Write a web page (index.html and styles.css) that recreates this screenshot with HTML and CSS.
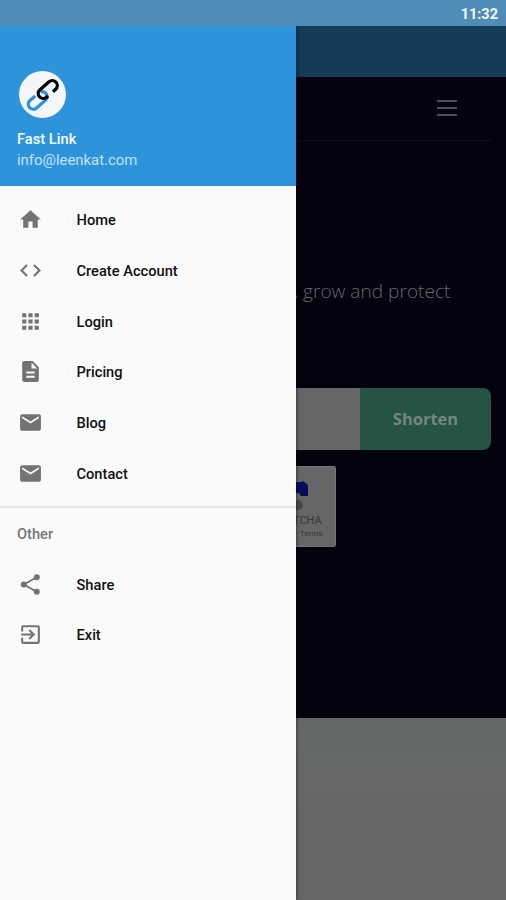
FILE: index.html
```html
<!DOCTYPE html>
<html lang="en">
<head>
<meta charset="utf-8">
<title>Fast Link</title>
<link rel="stylesheet" href="styles.css">
</head>
<body>
<header class="status"><span>11:32</span></header>
<div class="screen">
  <aside class="drawer">
    <div class="profile">
      <div class="avatar">
        <svg viewBox="0 0 47 47" fill="none" stroke-width="3.3">
          <path d="M1 -5H-6A5 5 0 0 0 -6 5H6A5 5 0 0 0 7.500 -4.600" stroke="#2d91dc" transform="translate(18.800 29.300) rotate(-41)"/>
          <path d="M-4 5H-6A5 5 0 0 1 -6 -5H6A5 5 0 0 1 6 5H2.500" stroke="#030507" transform="translate(28.800 18.500) rotate(-41)"/>
        </svg>
      </div>
      <div class="name">Fast Link</div>
      <div class="mail">info@leenkat.com</div>
    </div>
    <nav class="menu">
      <a class="item"><svg viewBox="0 0 24 24"><path d="M10 20v-6h4v6h5v-8h3L12 3 2 12h3v8z"/></svg>Home</a>
      <a class="item"><svg viewBox="0 0 24 24"><path d="M9.4 16.6L4.8 12l4.6-4.6L8 6l-6 6 6 6 1.4-1.4zm5.2 0l4.6-4.6-4.6-4.6L16 6l6 6-6 6-1.4-1.4z"/></svg>Create Account</a>
      <a class="item"><svg viewBox="0 0 24 24"><path d="M4 8h4V4H4v4zm6 12h4v-4h-4v4zm-6 0h4v-4H4v4zm0-6h4v-4H4v4zm6 0h4v-4h-4v4zm6-10v4h4V4h-4zm-6 4h4V4h-4v4zm6 6h4v-4h-4v4zm0 6h4v-4h-4v4z"/></svg>Login</a>
      <a class="item"><svg viewBox="0 0 24 24"><path d="M14 2H6c-1.100 0-2 .9-2 2v16c0 1.100.9 2 2 2h12c1.100 0 2-.9 2-2V8l-6-6zm2 16H8v-2h8v2zm0-4H8v-2h8v2zm-3-5V3.500L18.500 9H13z"/></svg>Pricing</a>
      <a class="item"><svg viewBox="0 0 24 24"><path d="M20 4H4c-1.100 0-2 .9-2 2v12c0 1.100.9 2 2 2h16c1.100 0 2-.9 2-2V6c0-1.100-.9-2-2-2zm0 4l-8 5-8-5V6l8 5 8-5v2z"/></svg>Blog</a>
      <a class="item"><svg viewBox="0 0 24 24"><path d="M20 4H4c-1.100 0-2 .9-2 2v12c0 1.100.9 2 2 2h16c1.100 0 2-.9 2-2V6c0-1.100-.9-2-2-2zm0 4l-8 5-8-5V6l8 5 8-5v2z"/></svg>Contact</a>
    </nav>
    <div class="group">Other</div>
    <nav>
      <a class="item"><svg viewBox="0 0 24 24"><circle cx="18" cy="5" r="2.900"/><circle cx="5.500" cy="12" r="2.900"/><circle cx="18" cy="19" r="2.900"/><path d="M18 5L5.500 12 18 19" fill="none" stroke="#737373" stroke-width="1.800"/></svg>Share</a>
      <a class="item"><svg viewBox="0 0 24 24"><path d="M10.090 15.590L11.500 17l5-5-5-5-1.410 1.410L12.670 11H3v2h9.670l-2.580 2.590zM19 3H5c-1.110 0-2 .9-2 2v4h2V5h14v14H5v-4H3v4c0 1.100.89 2 2 2h14c1.100 0 2-.9 2-2V5c0-1.100-.9-2-2-2z"/></svg>Exit</a>
    </nav>
  </aside>
  <main class="page">
    <div class="toolbar"></div>
    <section class="hero">
      <div class="navbar"><div class="burger"><i></i><i></i><i></i></div></div>
      <p class="lead">, grow and protect</p>
      <div class="form"><div class="field"></div><div class="button">Shorten</div></div>
      <div class="captcha">
        <svg viewBox="0 0 40 46"><path d="M0 15q4 1 7-1l5 4v11H5l-2-3H0z" fill="#060b5c"/><path d="M0 34l4-1 3 4-1 4-4 2H0z" fill="#484849"/></svg>
        <div class="brand">TCHA</div>
        <div class="terms">- Terms</div>
      </div>
    </section>
    <section class="below"></section>
  </main>
</div>
</body>
</html>
```
FILE: styles.css
```css
* { box-sizing: border-box; }
body {
  margin: 0;
  height: 900px;
  display: flex;
  flex-direction: column;
  overflow: hidden;
  font-family: Roboto, sans-serif;
}
.status {
  height: 26px;
  flex: none;
  display: flex;
  align-items: center;
  justify-content: flex-end;
  padding: 2px 8px 0 0;
  background: #4f8db8;
  color: #f4f9fd;
  font-size: 14.5px;
  font-weight: 700;
}
.screen { flex: 1; display: flex; min-height: 0; }
.drawer {
  width: 296px;
  flex: none;
  background: #fafafa;
  box-shadow: 0 0 4px rgba(0, 0, 0, .65);
  clip-path: inset(0 -8px 0 0);
  z-index: 1;
}
.profile {
  height: 159.500px;
  padding: 45px 17px 0;
  background: #2d94dc;
  color: #f5faff;
  font-size: 14.900px;
  line-height: 21px;
}
.avatar {
  width: 47px;
  height: 47px;
  margin: 0 0 11px 2px;
  border-radius: 50%;
  background: #f4f5f6;
}
.avatar svg { display: block; width: 47px; height: 47px; }
.name { font-weight: 500; font-size: 14.700px; }
.mail { color: #c3e1f8; }
.menu { padding: 9px 0 8px; border-bottom: 2px solid #e5e5e5; }
.item {
  display: flex;
  align-items: center;
  height: 50.650px;
  padding: 1px 0 0 17.500px;
  color: #111;
  font-size: 14.650px;
  font-weight: 500;
}
.item svg { width: 25px; height: 25px; margin: -1px 34px 0 0; fill: #737373; }
.group {
  height: 50.500px;
  padding-left: 17px;
  line-height: 53px;
  font-size: 14.650px;
  font-weight: 500;
  color: #777;
}
.page { flex: 1; min-width: 0; display: flex; flex-direction: column; overflow: hidden; }
.toolbar { height: 51px; flex: none; background: #143b58; }
.hero { height: 640.500px; flex: none; background: #04020f; padding-right: 15px; }
.navbar {
  height: 64px;
  display: flex;
  justify-content: flex-end;
  padding: 23px 34px 0 0;
  border-bottom: 1px solid #14121d;
}
.burger { width: 20px; display: flex; flex-direction: column; gap: 5px; }
.burger i { height: 2px; background: #4f4e53; }
.lead {
  margin: 135px 0 0 -2px;
  height: 31px;
  line-height: 30px;
  font-family: "Open Sans", sans-serif;
  font-size: 19.100px;
  font-weight: 300;
  color: #69686f;
  white-space: nowrap;
}
.form { display: flex; height: 62px; margin-top: 81px; border-radius: 0 8px 8px 0; overflow: hidden; }
.field { flex: 1; background: #666; }
.button {
  width: 131px;
  display: flex;
  align-items: center;
  justify-content: center;
  padding-bottom: 1px;
  background: #255344;
  color: #76877f;
  font-family: "Open Sans", sans-serif;
  font-size: 16.500px;
  font-weight: 700;
}
.captcha {
  width: 40px;
  height: 81px;
  margin-top: 16px;
  background: #666;
  border-radius: 0 3px 3px 0;
  border: solid #77777a;
  border-width: 1px 1px 1px 0;
  color: #37373a;
  overflow: hidden;
}
.captcha svg { display: block; width: 40px; height: 46px; }
.brand { font-size: 11px; line-height: 16px; margin-left: -3px; }
.terms { font-size: 8px; line-height: 10px; white-space: nowrap; }
.below { flex: 1; background: linear-gradient(#646869, #666768 40%, #666 50%); }
```
